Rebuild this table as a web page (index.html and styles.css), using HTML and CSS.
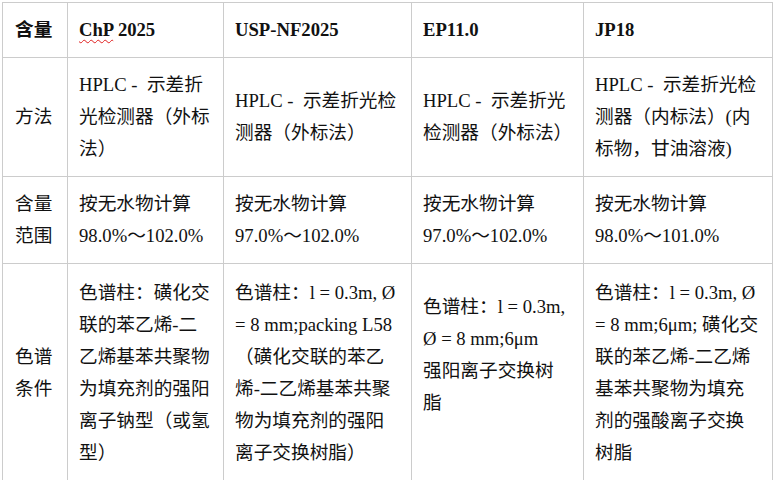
FILE: index.html
```html
<!DOCTYPE html>
<html lang="zh">
<head>
<meta charset="utf-8">
<title>含量</title>
<link rel="stylesheet" href="styles.css">
</head>
<body>
<table class="grid">
  <colgroup>
    <col class="c0"><col class="c1"><col class="c2"><col class="c3"><col class="c4">
  </colgroup>
  <tr class="head">
    <td class="label"><b>含量</b></td>
    <td><b><span class="spell">ChP</span> 2025</b></td>
    <td><b>USP-NF2025</b></td>
    <td><b>EP11.0</b></td>
    <td><b>JP18</b></td>
  </tr>
  <tr>
    <td class="label">方法</td>
    <td>HPLC -&nbsp; 示差折光检测器（外标法）</td>
    <td>HPLC -&nbsp; 示差折光检测器（外标法）</td>
    <td>HPLC -&nbsp; 示差折光检测器（外标法）</td>
    <td>HPLC -&nbsp; 示差折光检测器（内标法）(内标物，甘油溶液)</td>
  </tr>
  <tr>
    <td class="label">含量<br>范围</td>
    <td>按无水物计算<br>98.0%～102.0%</td>
    <td>按无水物计算<br>97.0%～102.0%</td>
    <td>按无水物计算<br>97.0%～102.0%</td>
    <td>按无水物计算<br>98.0%～101.0%</td>
  </tr>
  <tr class="tall">
    <td class="label">色谱<br>条件</td>
    <td>色谱柱：磺化交联的苯乙烯-二乙烯基苯共聚物为填充剂的强阳离子钠型（或氢型）</td>
    <td>色谱柱：l = 0.3m, Ø = 8&nbsp;mm;packing L58（磺化交联的苯乙烯-二乙烯基苯共聚物为填充剂的强阳离子交换树脂）</td>
    <td class="lift">色谱柱：l = 0.3m, Ø = 8&nbsp;mm;6μm<br>强阳离子交换树脂</td>
    <td>色谱柱：l = 0.3m, Ø = 8&nbsp;mm;6μm; 磺化交联的苯乙烯-二乙烯基苯共聚物为填充剂的强酸离子交换树脂</td>
  </tr>
</table>
</body>
</html>
```

FILE: styles.css
```css
html, body {
  margin: 0;
  padding: 0;
  background: #ffffff;
}
body {
  padding: 2px 0 0 2px;
  font-family: "Liberation Serif", "Noto Sans CJK SC", serif;
  font-size: 18.67px;
  line-height: 32px;
  color: #111;
}
.grid {
  border-collapse: collapse;
  table-layout: fixed;
  width: 770px;
}
.c0 { width: 65px; }
.c1 { width: 156px; }
.c2 { width: 188px; }
.c3 { width: 172px; }
.c4 { width: 189px; }
.grid td {
  border: 1px solid #cccccc;
  padding: 11px 10px 11px 11px;
  vertical-align: middle;
  text-align: left;
  word-break: normal;
  line-break: normal;
}
.grid td.label {
  padding-left: 12px;
  padding-right: 6px;
}
.grid .tall td {
  padding-top: 13px;
  padding-bottom: 13px;
}
.grid .tall td.lift {
  padding-right: 16px;
  padding-bottom: 50px;
}
.head td {
  padding-top: 11px;
  padding-bottom: 11px;
}
b {
  font-weight: 700;
}
.spell {
  text-decoration: underline wavy #e02020;
  text-decoration-thickness: 1px;
  text-underline-offset: 3px;
}
```
